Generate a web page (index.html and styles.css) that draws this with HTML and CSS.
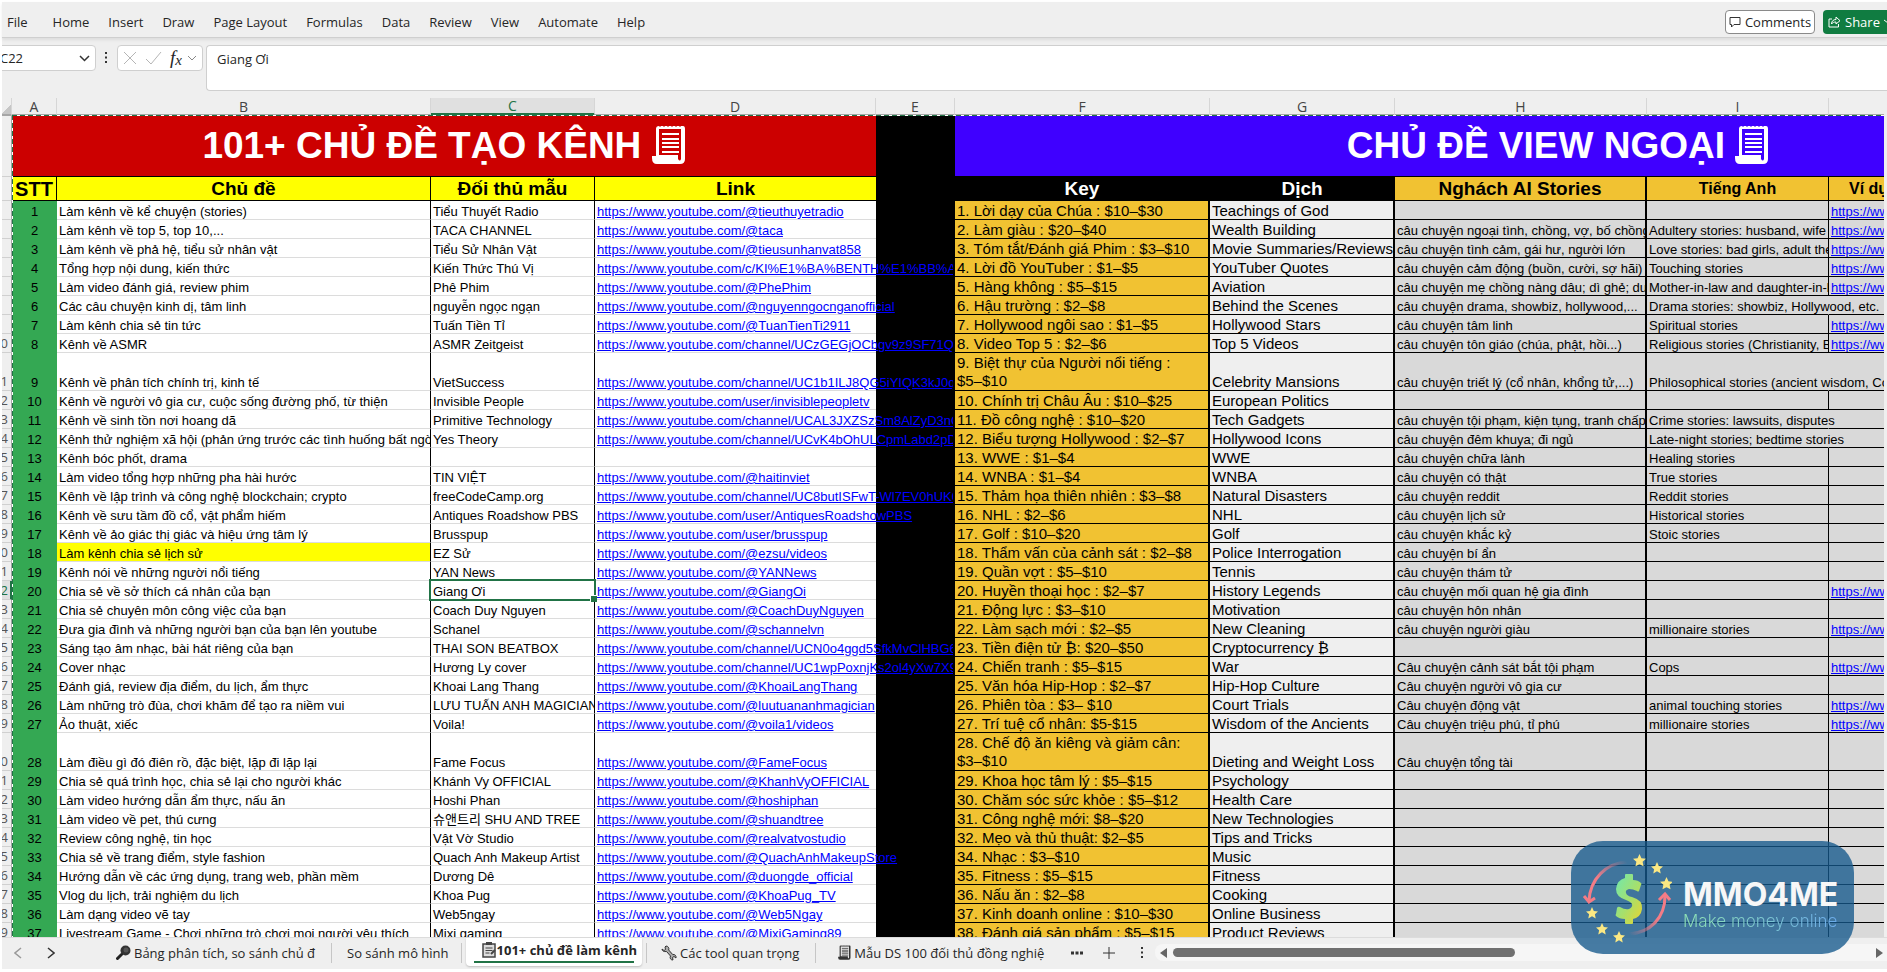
FILE: index.html
```html
<!DOCTYPE html>
<html lang="vi">
<head>
<meta charset="utf-8">
<title>101+ chủ đề làm kênh</title>
<link rel="stylesheet" href="styles.css">
</head>
<body>
<svg class="defs" aria-hidden="true">
  <symbol id="scroll" viewBox="0 0 34 40">
    <path d="M4 4Q4 1 7 1H31Q33 1 33 4V34Q33 39 28 39H5Q0 39 0 33V31H4Z" fill="currentColor"/>
    <path class="paper" d="M7 4H29V34Q28 37 26 34V30H7Z"/>
    <path d="M10 9H27M10 14H27M10 18H27M10 22H27M10 27H27" stroke="currentColor" stroke-width="2"/>
    <path class="nick" d="M8 0V2M12 0V2M16 0V2M20 0V2M24 0V2M28 0V2"/>
  </symbol>
  <symbol id="star" viewBox="0 0 20 20"><path d="M10 0l3 6.500 7 .8-5.200 4.800L16.200 19 10 15.600 3.800 19l1.400-6.900L0 7.300l7-.8z" fill="#fbe883"/></symbol>
</svg>

<header class="menubar">
  <nav class="menus">
    <button class="file">File</button><button>Home</button><button>Insert</button><button>Draw</button><button>Page Layout</button><button>Formulas</button><button>Data</button><button>Review</button><button>View</button><button>Automate</button><button>Help</button>
  </nav>
  <div class="actions">
    <button class="comments"><svg width="12" height="12" viewBox="0 0 12 12"><path d="M1 1.500h10v7H5L2.500 11V8.500H1z" fill="none" stroke="#333"/></svg>Comments</button>
    <button class="share"><svg width="13" height="13" viewBox="0 0 13 13"><path d="M4 4H1v8h9.500V9M3.500 9c0-3 2-4.500 4.500-4.500V2l4 3.700L8 9V7C6 7 4.500 7.500 3.500 9z" fill="none" stroke="#fff"/></svg>Share<svg width="8" height="5" viewBox="0 0 8 5"><path d="M0 1l4 3 4-3" fill="none" stroke="#fff"/></svg></button>
  </div>
</header>

<section class="formula">
  <div class="namebox"><input aria-label="Name box" value="C22"><svg width="11" height="7" viewBox="0 0 11 7"><path d="M1 1l4.500 4.500L10 1" fill="none" stroke="#333" stroke-width="1.500"/></svg></div>
  <svg class="grip" width="3" height="12" viewBox="0 0 3 12"><path d="M0 0h2v2H0zM0 4.500h2v2H0zM0 9h2v2H0z" fill="#333"/></svg>
  <div class="fxbox">
    <button aria-label="Cancel"><svg width="14" height="14" viewBox="0 0 14 14"><path d="M1 1l12 12M13 1L1 13" stroke="#b5b5b5"/></svg></button>
    <button aria-label="Enter"><svg width="17" height="14" viewBox="0 0 17 14"><path d="M1 8l5 5L16 1" fill="none" stroke="#b5b5b5"/></svg></button>
    <button class="fx" aria-label="Insert function">f<small>x</small><svg width="10" height="6" viewBox="0 0 10 6"><path d="M1 1l4 4 4-4" fill="none" stroke="#888"/></svg></button>
  </div>
  <textarea aria-label="Formula bar">Giang Ơi</textarea>
</section>

<main class="sheet">
<table class="grid">
<colgroup><col class="w0"><col class="wa"><col class="wb"><col class="wc"><col class="wd"><col class="we"><col class="wf"><col class="wg"><col class="wh"><col class="wi"><col class="wj"></colgroup>
<thead>
<tr class="letters"><th class="corner"><th>A<th>B<th class="on">C<th>D<th>E<th>F<th>G<th>H<th>I<th></tr>
<tr class="title"><td><th class="red" colspan="4">101+ CHỦ ĐỀ TẠO KÊNH <svg width="34" height="40"><use href="#scroll"/></svg><td class="black"><th class="blue" colspan="5">CHỦ ĐỀ VIEW NGOẠI <svg width="34" height="40"><use href="#scroll"/></svg></tr>
<tr class="heads"><td><th class="stt">STT<th>Chủ đề<th>Đối thủ mẫu<th>Link<td class="black"><th class="black">Key<th class="black">Dịch<th class="gold">Nghách AI Stories<th class="gold sm">Tiếng Anh<th class="gold sm first">Ví dụ</tr>
</thead>
<tbody>
<tr><td><td>1<td>Làm kênh về kể chuyện (stories)<td>Tiểu Thuyết Radio<td><a href="#">https://www.youtube.com/@tieuthuyetradio</a><td><td>1. Lời dạy của Chúa : $10–$30<td>Teachings of God<td><td><td><a href="#">https://www.youtube.com</a></tr>
<tr><td><td>2<td>Làm kênh về top 5, top 10,...<td>TACA CHANNEL<td><a href="#">https://www.youtube.com/@taca</a><td><td>2. Làm giàu : $20–$40<td>Wealth Building<td>câu chuyện ngoại tình, chồng, vợ, bố chồng<td>Adultery stories: husband, wife<td><a href="#">https://www.youtube.com</a></tr>
<tr><td><td>3<td>Làm kênh về phả hệ, tiểu sử nhân vật<td>Tiểu Sử Nhân Vật<td><a href="#">https://www.youtube.com/@tieusunhanvat858</a><td><td>3. Tóm tắt/Đánh giá Phim : $3–$10<td>Movie Summaries/Reviews<td>câu chuyện tình cảm, gái hư, người lớn<td>Love stories: bad girls, adult themes<td><a href="#">https://www.youtube.com</a></tr>
<tr><td><td>4<td>Tổng hợp nội dung, kiến thức<td>Kiến Thức Thú Vị<td><a href="#">https://www.youtube.com/c/KI%E1%BA%BENTH%E1%BB%A8C</a><td><td>4. Lời đồ YouTuber : $1–$5<td>YouTuber Quotes<td>câu chuyện cảm động (buồn, cười, sợ hãi)<td>Touching stories<td><a href="#">https://www.youtube.com</a></tr>
<tr><td><td>5<td>Làm video đánh giá, review phim<td>Phê Phim<td><a href="#">https://www.youtube.com/@PhePhim</a><td><td>5. Hàng không : $5–$15<td>Aviation<td>câu chuyện mẹ chồng nàng dâu; dì ghẻ; du<td>Mother-in-law and daughter-in-law<td><a href="#">https://www.youtube.com</a></tr>
<tr><td><td>6<td>Các câu chuyện kinh dị, tâm linh<td>nguyễn ngọc ngạn<td><a href="#">https://www.youtube.com/@nguyenngocnganofficial</a><td><td>6. Hậu trường : $2–$8<td>Behind the Scenes<td>câu chuyện drama, showbiz, hollywood,...<td class="spill">Drama stories: showbiz, Hollywood, etc.<td></tr>
<tr><td><td>7<td>Làm kênh chia sẻ tin tức<td>Tuấn Tiền Tỉ<td><a href="#">https://www.youtube.com/@TuanTienTi2911</a><td><td>7. Hollywood ngôi sao : $1–$5<td>Hollywood Stars<td>câu chuyện tâm linh<td>Spiritual stories<td><a href="#">https://www.youtube.com</a></tr>
<tr><td>10<td>8<td>Kênh về ASMR<td>ASMR Zeitgeist<td><a href="#">https://www.youtube.com/channel/UCzGEGjOCbgv9z9SF71QyI7g</a><td><td>8. Video Top 5 : $2–$6<td>Top 5 Videos<td>câu chuyện tôn giáo (chúa, phật, hồi...)<td>Religious stories (Christianity, Buddhism)<td><a href="#">https://www.youtube.com</a></tr>
<tr class="tall"><td>11<td>9<td>Kênh về phân tích chính trị, kinh tế<td>VietSuccess<td><a href="#">https://www.youtube.com/channel/UC1b1ILJ8QG5iYIQK3kJ0qsw</a><td><td>9. Biệt thự của Người nổi tiếng : <span class="price">$5–$10</span><td>Celebrity Mansions<td>câu chuyện triết lý (cổ nhân, khổng tử,...)<td class="spill">Philosophical stories (ancient wisdom, Confucius)<td></tr>
<tr><td>12<td>10<td>Kênh về người vô gia cư, cuộc sống đường phố, từ thiện<td>Invisible People<td><a href="#">https://www.youtube.com/user/invisiblepeopletv</a><td><td>10. Chính trị Châu Âu : $10–$25<td>European Politics<td><td><td></tr>
<tr><td>13<td>11<td>Kênh về sinh tồn nơi hoang dã<td>Primitive Technology<td><a href="#">https://www.youtube.com/channel/UCAL3JXZSzSm8AlZyD3nQdBA</a><td><td>11. Đồ công nghệ : $10–$20<td>Tech Gadgets<td>câu chuyện tội phạm, kiện tụng, tranh chấp<td class="spill">Crime stories: lawsuits, disputes<td></tr>
<tr><td>14<td>12<td>Kênh thử nghiệm xã hội (phản ứng trước các tình huống bất ngờ)<td>Yes Theory<td><a href="#">https://www.youtube.com/channel/UCvK4bOhULCpmLabd2pDMtnA</a><td><td>12. Biểu tượng Hollywood : $2–$7<td>Hollywood Icons<td>câu chuyện đêm khuya; đi ngủ<td class="spill">Late-night stories; bedtime stories<td></tr>
<tr><td>15<td>13<td>Kênh bóc phốt, drama<td><td><td><td>13. WWE : $1–$4<td>WWE<td>câu chuyện chữa lành<td>Healing stories<td></tr>
<tr><td>16<td>14<td>Làm video tổng hợp những pha hài hước<td>TIN VIỆT<td><a href="#">https://www.youtube.com/@haitinviet</a><td><td>14. WNBA : $1–$4<td>WNBA<td>câu chuyện có thật<td>True stories<td></tr>
<tr><td>17<td>15<td>Kênh về lập trình và công nghệ blockchain; crypto<td>freeCodeCamp.org<td><a href="#">https://www.youtube.com/channel/UC8butISFwT-Wl7EV0hUK0BQ</a><td><td>15. Thảm họa thiên nhiên : $3–$8<td>Natural Disasters<td>câu chuyện reddit<td>Reddit stories<td></tr>
<tr><td>18<td>16<td>Kênh về sưu tầm đồ cổ, vật phẩm hiếm<td>Antiques Roadshow PBS<td><a href="#">https://www.youtube.com/user/AntiquesRoadshowPBS</a><td><td>16. NHL : $2–$6<td>NHL<td>câu chuyện lịch sử<td>Historical stories<td></tr>
<tr><td>19<td>17<td>Kênh về ảo giác thị giác và hiệu ứng tâm lý<td>Brusspup<td><a href="#">https://www.youtube.com/user/brusspup</a><td><td>17. Golf : $10–$20<td>Golf<td>câu chuyện khắc kỷ<td>Stoic stories<td></tr>
<tr><td>20<td>18<td class="mark">Làm kênh chia sẻ lịch sử<td>EZ Sử<td><a href="#">https://www.youtube.com/@ezsu/videos</a><td><td>18. Thẩm vấn của cảnh sát : $2–$8<td>Police Interrogation<td>câu chuyện bí ẩn<td><td></tr>
<tr><td>21<td>19<td>Kênh nói về những người nổi tiếng<td>YAN News<td><a href="#">https://www.youtube.com/@YANNews</a><td><td>19. Quần vợt : $5–$10<td>Tennis<td>câu chuyện thám tử<td><td></tr>
<tr><td class="on">22<td>20<td>Chia sẻ về sở thích cá nhân của bạn<td class="cursor">Giang Ơi<td><a href="#">https://www.youtube.com/@GiangOi</a><td><td>20. Huyền thoại học : $2–$7<td>History Legends<td>câu chuyện mối quan hệ gia đình<td><td><a href="#">https://www.youtube.com</a></tr>
<tr><td>23<td>21<td>Chia sẻ chuyên môn công việc của bạn<td>Coach Duy Nguyen<td><a href="#">https://www.youtube.com/@CoachDuyNguyen</a><td><td>21. Động lực : $3–$10<td>Motivation<td>câu chuyện hôn nhân<td><td></tr>
<tr><td>24<td>22<td>Đưa gia đình và những người bạn của bạn lên youtube<td>Schanel<td><a href="#">https://www.youtube.com/@schannelvn</a><td><td>22. Làm sạch mới : $2–$5<td>New Cleaning<td>câu chuyện người giàu<td>millionaire stories<td><a href="#">https://www.youtube.com</a></tr>
<tr><td>25<td>23<td>Sáng tạo âm nhạc, bài hát riêng của bạn<td>THAI SON BEATBOX<td><a href="#">https://www.youtube.com/channel/UCN0o4ggd5SfkMvClHBG6xQg</a><td><td>23. Tiền điện tử ₿: $20–$50<td>Cryptocurrency ₿<td><td><td></tr>
<tr><td>26<td>24<td>Cover nhạc<td>Hương Ly cover<td><a href="#">https://www.youtube.com/channel/UC1wpPoxnjKs2ol4yXw7X9Tg</a><td><td>24. Chiến tranh : $5–$15<td>War<td>Câu chuyện cảnh sát bắt tội phạm<td>Cops<td><a href="#">https://www.youtube.com</a></tr>
<tr><td>27<td>25<td>Đánh giá, review địa điểm, du lịch, ẩm thực<td>Khoai Lang Thang<td><a href="#">https://www.youtube.com/@KhoaiLangThang</a><td><td>25. Văn hóa Hip-Hop : $2–$7<td>Hip-Hop Culture<td>Câu chuyện người vô gia cư<td><td></tr>
<tr><td>28<td>26<td>Làm những trò đùa, chơi khăm để tạo ra niềm vui<td>LƯU TUẤN ANH MAGICIAN<td><a href="#">https://www.youtube.com/@luutuananhmagician</a><td><td>26. Phiên tòa : $3– $10<td>Court Trials<td>Câu chuyện động vật<td>animal touching stories<td><a href="#">https://www.youtube.com</a></tr>
<tr><td>29<td>27<td>Ảo thuật, xiếc<td>Voila!<td><a href="#">https://www.youtube.com/@voila1/videos</a><td><td>27. Trí tuệ cổ nhân: $5-$15<td>Wisdom of the Ancients<td>Câu chuyện triệu phú, tỉ phú<td>millionaire stories<td><a href="#">https://www.youtube.com</a></tr>
<tr class="tall"><td>30<td>28<td>Làm điều gì đó điên rồ, đặc biệt, lặp đi lặp lại<td>Fame Focus<td><a href="#">https://www.youtube.com/@FameFocus</a><td><td>28. Chế độ ăn kiêng và giảm cân: <span class="price">$3–$10</span><td>Dieting and Weight Loss<td>Câu chuyện tổng tài<td><td></tr>
<tr><td>31<td>29<td>Chia sẻ quá trình học, chia sẻ lại cho người khác<td>Khánh Vy OFFICIAL<td><a href="#">https://www.youtube.com/@KhanhVyOFFICIAL</a><td><td>29. Khoa học tâm lý : $5–$15<td>Psychology<td><td><td></tr>
<tr><td>32<td>30<td>Làm video hướng dẫn ẩm thực, nấu ăn<td>Hoshi Phan<td><a href="#">https://www.youtube.com/@hoshiphan</a><td><td>30. Chăm sóc sức khỏe : $5–$12<td>Health Care<td><td><td></tr>
<tr><td>33<td>31<td>Làm video về pet, thú cưng<td>슈앤트리 SHU AND TREE<td><a href="#">https://www.youtube.com/@shuandtree</a><td><td>31. Công nghệ mới: $8–$20<td>New Technologies<td><td><td></tr>
<tr><td>34<td>32<td>Review công nghệ, tin học<td>Vật Vờ Studio<td><a href="#">https://www.youtube.com/@realvatvostudio</a><td><td>32. Mẹo và thủ thuật: $2–$5<td>Tips and Tricks<td><td><td></tr>
<tr><td>35<td>33<td>Chia sẻ về trang điểm, style fashion<td>Quach Anh Makeup Artist<td><a href="#">https://www.youtube.com/@QuachAnhMakeupStore</a><td><td>34. Nhạc : $3–$10<td>Music<td><td><td></tr>
<tr><td>36<td>34<td>Hướng dẫn về các ứng dụng, trang web, phần mềm<td>Dương Dê<td><a href="#">https://www.youtube.com/@duongde_official</a><td><td>35. Fitness : $5–$15<td>Fitness<td><td><td></tr>
<tr><td>37<td>35<td>Vlog du lịch, trải nghiệm du lịch<td>Khoa Pug<td><a href="#">https://www.youtube.com/@KhoaPug_TV</a><td><td>36. Nấu ăn : $2–$8<td>Cooking<td><td><td></tr>
<tr><td>38<td>36<td>Làm dạng video vẽ tay<td>Web5ngay<td><a href="#">https://www.youtube.com/@Web5Ngay</a><td><td>37. Kinh doanh online : $10–$30<td>Online Business<td><td><td></tr>
<tr><td>39<td>37<td>Livestream Game - Chơi những trò chơi mọi người yêu thích<td>Mixi gaming<td><a href="#">https://www.youtube.com/@MixiGaming89</a><td><td>38. Đánh giá sản phẩm : $5–$15<td>Product Reviews<td><td><td></tr>
</tbody>
</table>
</main>

<footer class="tabs">
  <button class="arrow" aria-label="Previous sheet"><svg width="8" height="12" viewBox="0 0 8 12"><path d="M7 1L1 6l6 5" fill="none" stroke="#999" stroke-width="1.500"/></svg></button>
  <button class="arrow next" aria-label="Next sheet"><svg width="8" height="12" viewBox="0 0 8 12"><path d="M1 1l6 5-6 5" fill="none" stroke="#333" stroke-width="1.500"/></svg></button>
  <button class="tab lead"><svg width="15" height="15" viewBox="0 0 15 15"><circle cx="9.500" cy="5.500" r="5" fill="#333"/><circle cx="10" cy="5" r="2.500" fill="#555"/><path d="M5.500 9.500L1.500 13.500" stroke="#222" stroke-width="3" stroke-linecap="round"/></svg>Bảng phân tích, so sánh chủ đ</button>
  <button class="tab">So sánh mô hình</button>
  <button class="tab active"><svg width="14" height="16" viewBox="0 0 14 16"><path d="M1 2h12v13H1z" fill="#ddd" stroke="#444" stroke-width="1.500"/><path d="M4 0h6v3H4z" fill="#444"/><path d="M3.500 6h7M3.500 8.500h7M3.500 11h4" stroke="#444"/><path d="M9 12l4-4" stroke="#444" stroke-width="2"/></svg>101+ chủ đề làm kênh</button>
  <button class="tab tools"><svg width="16" height="16" viewBox="0 0 16 16"><path d="M1 4l2 1.500 1.500-1L4 2l1-1c2 0 3.500 2 2.700 4l4 4.500C14 9 15.500 11 15 13l-2-1.500-1.500 1 .5 2.500c-2.500 0-3.500-2-2.500-4l-4-4.500C3 7 1 6 1 4z" fill="#aaa" stroke="#333"/></svg>Các tool quan trọng</button>
  <button class="tab last"><svg class="mini" width="13" height="15"><use href="#scroll"/></svg>Mẫu DS 100 đối thủ đồng nghiệ</button>
  <button class="icon dots" aria-label="All sheets"><svg width="12" height="4" viewBox="0 0 12 4"><path d="M0 .5h3v3H0zM4.500 .5h3v3h-3zM9 .5h3v3H9z" fill="#333"/></svg></button>
  <button class="icon plus" aria-label="New sheet"><svg width="12" height="12" viewBox="0 0 12 12"><path d="M6 0v12M0 6h12" stroke="#333"/></svg></button>
  <svg class="grip" width="3" height="12" viewBox="0 0 3 12"><path d="M0 0h2v2H0zM0 4.500h2v2H0zM0 9h2v2H0z" fill="#333"/></svg>
  <div class="scrollbar"><svg width="8" height="10" viewBox="0 0 8 10"><path d="M7 0v10L0 5z" fill="#666"/></svg><div class="track"><div class="thumb"></div></div><svg width="8" height="10" viewBox="0 0 8 10"><path d="M1 0v10l7-5z" fill="#666"/></svg></div>
</footer>

<aside class="badge">
  <svg width="90" height="90" viewBox="0 0 90 90">
    <defs>
      <linearGradient id="r1" x1="1" y1="0" x2="0" y2="1"><stop offset="0" stop-color="#f47c86" stop-opacity="0"/><stop offset=".6" stop-color="#f47c86"/></linearGradient>
      <linearGradient id="r2" x1="0" y1="1" x2="1" y2="0"><stop offset="0" stop-color="#f47c86" stop-opacity="0"/><stop offset=".6" stop-color="#f47c86"/></linearGradient>
      <linearGradient id="gd" x1="0" y1="0" x2="1" y2="1"><stop offset="0" stop-color="#6fe8b0"/><stop offset=".55" stop-color="#a8df6a"/><stop offset="1" stop-color="#ecd32e"/></linearGradient>
    </defs>
    <path d="M45 9C24 10 8 26 7 48" fill="none" stroke="url(#r1)" stroke-width="3"/>
    <path d="M2 43l5 6 6-4" fill="none" stroke="#f47c86" stroke-width="3"/>
    <path d="M47 81c21-1 36-16 36-38" fill="none" stroke="url(#r2)" stroke-width="3"/>
    <path d="M77 47l6-6 5 6" fill="none" stroke="#f47c86" stroke-width="3"/>
    <path d="M43 22q0-1 1-1h6q1 0 1 1v5q5 0 8 3 1 1 0 2l-2 6q-1 1-2 0-4-2-8-2-4 1-3 4 1 3 6 4 11 3 10 12-1 8-9 10v4q0 1-1 1h-6q-1 0-1-1v-4q-6 0-9-3-1-1 0-2l1-6q1-2 3-1 5 3 9 2 4-2 3-5-1-2-6-4-10-3-10-11 1-9 9-11z" fill="url(#gd)"/>
    <use href="#star" x="51" y="1" width="13" height="13"/><use href="#star" x="69" y="9" width="12" height="12"/><use href="#star" x="78" y="24" width="13" height="13"/>
    <use href="#star" x="4" y="54" width="12" height="12"/><use href="#star" x="14" y="70" width="12" height="12"/><use href="#star" x="31" y="78" width="12" height="12"/>
  </svg>
  <div class="brand"><strong>MMO4ME</strong><span>Make money online</span></div>
</aside>
</body>
</html>
```
FILE: styles.css
```css
* { box-sizing: border-box; }
:root { --ui: "Open Sans", "Noto Sans", sans-serif; --cell: "Liberation Sans", "Noto Sans CJK KR", Arial, sans-serif; --chrome: #efefef; --green: #217346; }
body { margin: 0; height: 100vh; padding: 2px 0 3px 2px; background: #fff; display: flex; flex-direction: column; overflow: hidden; font: 13px var(--ui); color: #262626; }
button { font: inherit; color: inherit; background: none; border: 0; padding: 0; white-space: nowrap; }
.defs { position: absolute; width: 0; height: 0; }

.menubar { height: 36px; padding-top: 4px; background: var(--chrome); border-bottom: 1px solid #cfcfcf; box-shadow: 0 2px 3px rgba(0,0,0,.08); display: flex; align-items: center; justify-content: space-between; z-index: 1; }
.menus { display: flex; gap: 19px; padding-left: 5px; }
.file { margin-right: 6px; }
.actions { display: flex; gap: 8px; height: 24px; }
.actions button { display: flex; align-items: center; gap: 4px; border-radius: 4px; font-size: 13px; }
.actions .comments { width: 90px; justify-content: center; background: #fff; border: 1px solid #8a8a8a; }
.actions .share { width: 64px; padding-left: 5px; background: #107c41; color: #fff; border-radius: 4px 0 0 4px; overflow: hidden; }
.actions svg { flex: none; }

.formula { height: 60px; padding-top: 7px; background: var(--chrome); display: flex; align-items: flex-start; overflow: hidden; }
.namebox, .fxbox { height: 26px; display: flex; align-items: center; background: #fff; border: 1px solid #cfcfcf; border-radius: 4px; }
.namebox { width: 104px; margin-left: -10px; padding: 0 5px 0 7px; }
.namebox input { width: 100%; min-width: 0; border: 0; padding: 0; background: none; font: 13px var(--ui); color: #262626; }
.namebox svg { flex: none; }
.formula > .grip { margin: 7px 9px 0; }
.fxbox { width: 86px; padding: 0 5px; justify-content: space-between; }
.fxbox button { display: flex; align-items: center; }
.fxbox .fx { font: italic 19px "Liberation Serif", serif; }
.fx small { font-size: 15px; margin: 5px 5px 0 0; }
.formula textarea { flex: 1; height: 46px; margin-left: 3px; padding: 4px 10px; border: 1px solid #cfcfcf; border-right: 0; border-radius: 4px 0 0 4px; background: #fff; font: 13px/18px var(--ui); color: #262626; resize: none; overflow: hidden; }

.sheet { flex: 1; min-height: 0; overflow: hidden; border-right: 3px solid var(--chrome); position: relative; background: #fff; }
.grid { table-layout: fixed; width: 2159px; border-collapse: separate; border-spacing: 0; font: 13px/15px var(--cell); color: #000; }
.w0 { width: 10px; } .wa { width: 45px; } .wb { width: 374px; } .wc { width: 164px; } .wd { width: 281px; } .we { width: 79px; }
.wf { width: 255px; } .wg { width: 185px; } .wh { width: 252px; } .wi { width: 182px; } .wj { width: 332px; }
.grid td, .grid th { padding: 0; white-space: nowrap; }
.letters th { height: 18px; background: var(--chrome); border-bottom: 2px solid #a6a6a6; border-right: 1px solid #d6d6d6; font: 14px/15px var(--ui); color: #444; }
.letters .on { background: #e0e0e0; color: var(--green); border-bottom: 3px solid var(--green); }
.letters .corner { background: linear-gradient(135deg, var(--chrome) 60%, #c6c6c6 60%); }
.title th, .title td { height: 61px; border-bottom: 1px solid #000; color: #fff; font: bold 37px/58px var(--cell); }
.title svg { vertical-align: -7px; }
.title .red { background: #cc0000; --paper: #cc0000; }
.title .blue { background: #3f00ff; --paper: #3f00ff; }
.paper { fill: var(--paper); }
.nick { stroke: var(--paper); stroke-width: 1px; }
.heads th { height: 24px; background: #ffff00; border-right: 1px solid #000; border-bottom: 1px solid #000; font: bold 19px/22px var(--cell); vertical-align: bottom; overflow: hidden; }
.heads .stt { font-size: 20px; }
.heads th:nth-child(5) { border-right: 0; }
.grid .black { background: #000; color: #fff; }
.heads .gold { background: #f1c232; }
.heads .gold:nth-child(9) { border-right-width: 2px; }
.heads .sm { font-size: 16px; }
.heads .first { text-align: left; padding-left: 20px; }

.grid tr:not(.letters) > td:first-child { background: var(--chrome); color: #555; border-right: 1px solid #a6a6a6; border-bottom: 1px solid #d0d0d0; direction: rtl; text-align: right; padding: 0 4px 0 0; font: 13px/17px var(--ui); }
.grid tbody td:first-child { text-align: left; }
.grid tr > td.on:first-child { background: #e0e0e0; color: var(--green); border-right: 2px solid var(--green); }
.grid tbody td { height: 19px; vertical-align: bottom; border-bottom: 1px solid #dcdcdc; padding-left: 2px; overflow: hidden; }
.grid tbody .tall td { height: 38px; }
.grid tbody td:nth-child(2) { background: #34a853; border-color: #34a853; text-align: center; padding: 0; }
.grid tbody td:nth-child(3), .grid tbody td:nth-child(4) { border-right: 1px solid #000; }
.grid tbody td:nth-child(5) { overflow: visible; }
.grid tbody td:nth-child(5) a { display: block; width: 356px; overflow: hidden; }
.grid tbody td:nth-child(6) { background: #000; border-color: #000; }
.grid tbody td:nth-child(n+7) { border-color: #000; border-right: 1px solid #000; background: #d9d9d9; }
.grid tbody td:nth-child(7) { background: #f1c232; border-right-width: 2px; font-size: 15px; line-height: 16px; white-space: normal; }
.grid tbody .tall td:nth-child(7) { line-height: 18px; }
.price { white-space: nowrap; }
.grid tbody td:nth-child(8) { background: #efefef; border-right-width: 2px; font-size: 15px; line-height: 16px; }
.grid tbody td:nth-child(9) { border-right-width: 2px; }
.grid tbody td.spill { overflow: visible; border-right-color: #d9d9d9; }
.grid tbody .mark { background: #ffff00; }
.grid a { color: #0000ff; }
.grid tbody .cursor { position: relative; overflow: visible; }
.cursor::before { content: ""; position: absolute; inset: -2px; border: 2px solid var(--green); }
.cursor::after { content: ""; position: absolute; right: -3px; bottom: -3px; width: 6px; height: 6px; background: var(--green); border: solid #fff; border-width: 1px 0 0 1px; }
.sheet::before, .sheet::after { content: ""; position: absolute; left: 10px; top: 17px; z-index: 1; }
.sheet::before { right: 0; height: 1px; background: repeating-linear-gradient(90deg, var(--green) 0 5px, #fff 5px 8px); }
.sheet::after { bottom: 0; width: 1px; background: repeating-linear-gradient(var(--green) 0 5px, #fff 5px 8px); }

.tabs { height: 32px; flex: none; padding-bottom: 2px; display: flex; align-items: center; background: var(--chrome); border-top: 1px solid #dcdcdc; font-size: 13px; }
.tabs button { display: flex; align-items: center; }
.arrow { margin-left: 12px; }
.next { margin-left: 25px; }
.tab { height: 20px; gap: 3px; border-right: 1px solid #c6c6c6; }
.tabs .tab { padding: 0 12px 0 15px; }
.tabs .lead { margin-left: 46px; padding-right: 16px; }
.tabs .active { height: 28px; align-self: flex-start; margin: 0 4px; padding: 0 5px 4px 16px; gap: 1px; background: linear-gradient(var(--green), var(--green)) 8px 23px / calc(100% - 16px) 2px no-repeat #fff; border: 0; border-radius: 0 0 4px 4px; font-weight: bold; box-shadow: 0 1px 2px rgba(0,0,0,.2); }
.tabs .tools { border-left: 1px solid #c6c6c6; padding: 0 16px 0 14px; }
.tabs .last { padding-left: 22px; border: 0; }
.mini { color: #333; --paper: #e8e8e8; }
.dots { margin-left: 15px; }
.plus { margin: 0 26px 0 20px; }
.scrollbar { flex: 1; height: 17px; margin-left: 11px; padding: 0 4px 0 5px; display: flex; align-items: center; gap: 5px; background: #f6f6f6; border-radius: 8px 0 0 8px; }
.track { flex: 1; }
.thumb { width: 49%; height: 9px; border-radius: 5px; background: #707070; }

.badge { position: absolute; right: 33px; bottom: 18px; z-index: 2; width: 283px; height: 113px; padding: 0 13px 0 11px; border-radius: 32px; background: rgba(20,88,140,.78); display: flex; align-items: center; justify-content: space-between; }
.brand { display: flex; flex-direction: column; width: 158px; padding-top: 18px; white-space: nowrap; }
.brand strong { font: 700 32px/28px Inter, sans-serif; color: #f7f7f7; }
.brand span { font: 300 17px/24px Inter, sans-serif; background: linear-gradient(90deg, #8fe3b4, #6aa9ea); background-clip: text; color: transparent; }
```
